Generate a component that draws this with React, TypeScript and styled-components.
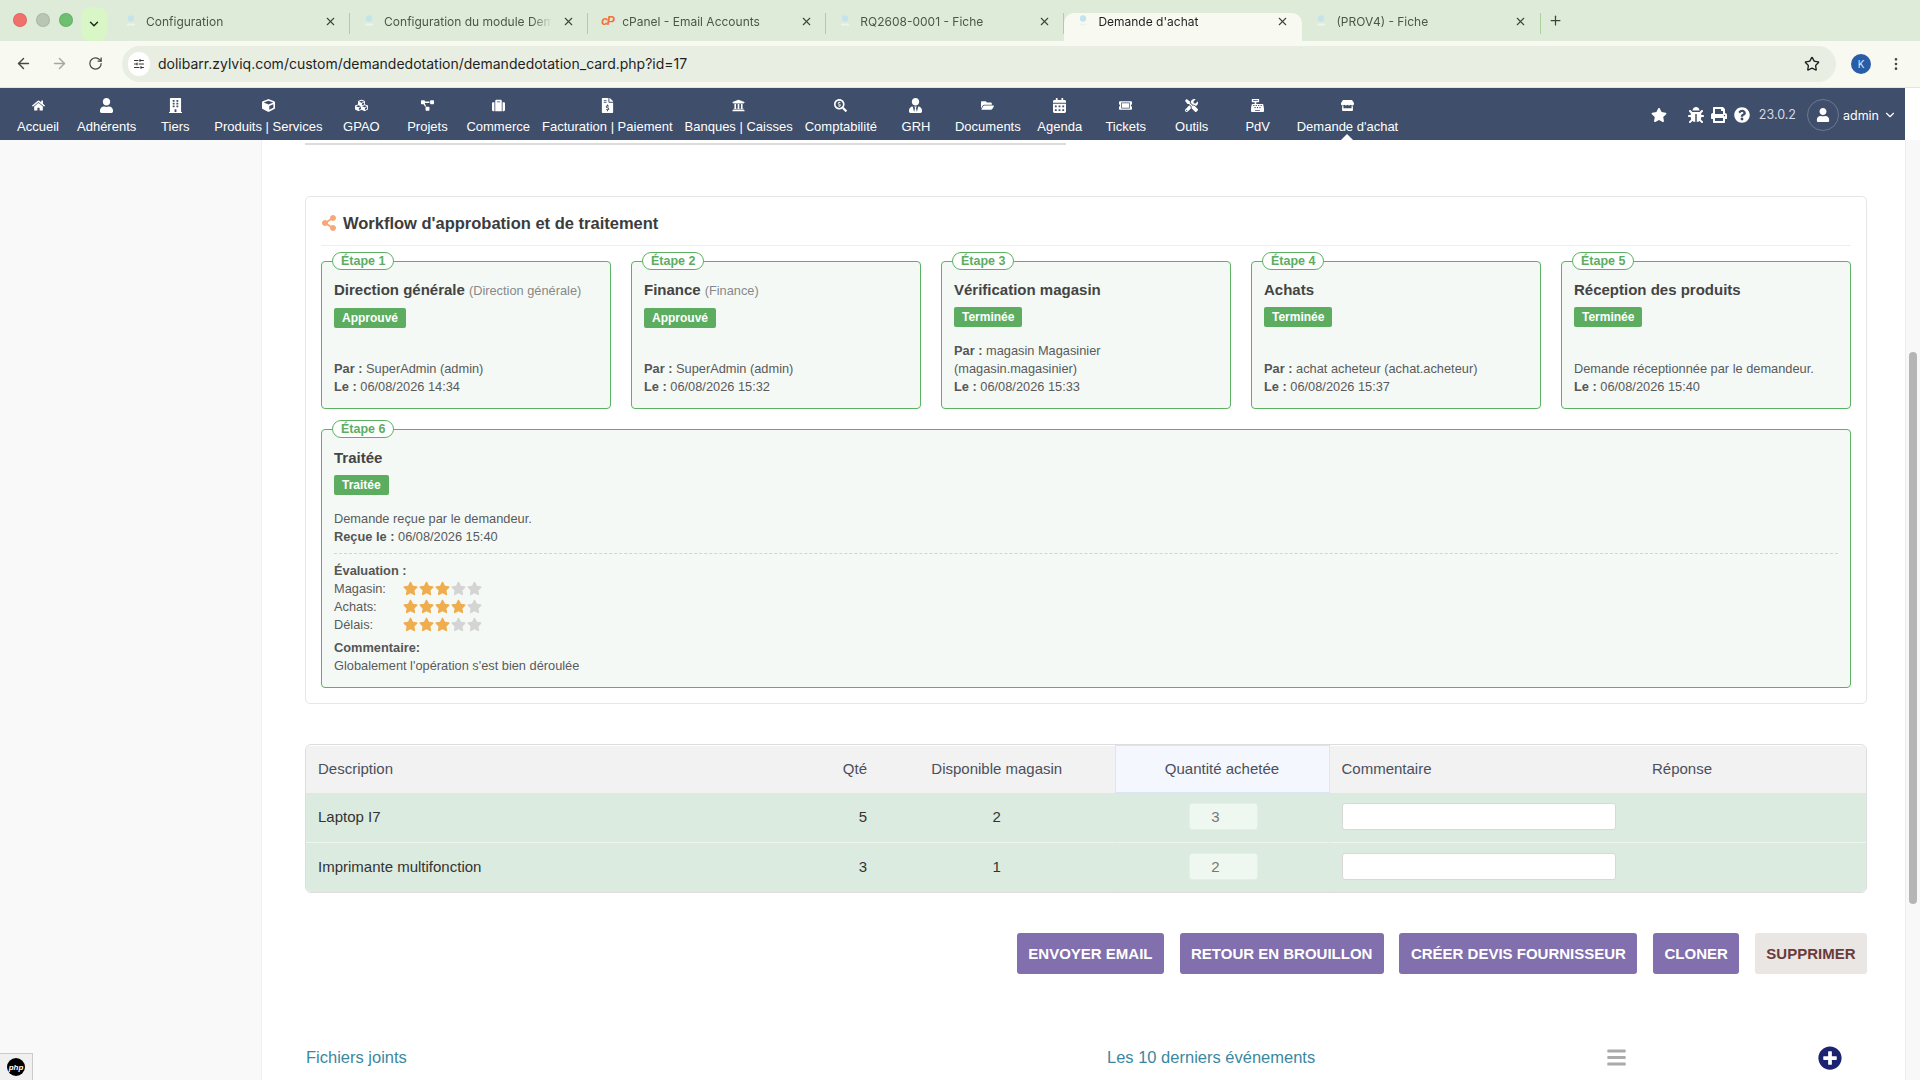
import React from "react";
import styled, { createGlobalStyle } from "styled-components";
import {
  FaHome, FaUser, FaBuilding, FaCube, FaCubes, FaProjectDiagram, FaSuitcase, FaFileInvoiceDollar,
  FaUniversity, FaSearchDollar, FaUserTie, FaFolderOpen, FaCalendarAlt, FaTicketAlt, FaTools,
  FaCashRegister, FaStore, FaStar, FaBug, FaPrint, FaQuestionCircle, FaShareAlt, FaPlusCircle, FaBars,
} from "react-icons/fa";
import { ArrowLeft, ArrowRight, RotateCw, Star, EllipsisVertical, X, Plus, ChevronDown, SlidersHorizontal } from "lucide-react";

const GlobalStyle = createGlobalStyle`
  html, body { margin: 0; padding: 0; height: 100%; overflow: hidden; background: #fff; }
  body { font-family: "Liberation Sans", Arial, sans-serif; color: #333; }
  * { box-sizing: border-box; }
`;

const tabs = [
  { title: "Configuration" },
  { title: "Configuration du module Demande" },
  { title: "cPanel - Email Accounts", cpanel: true },
  { title: "RQ2608-0001 - Fiche" },
  { title: "Demande d'achat", active: true },
  { title: "(PROV4) - Fiche" },
];

const menu = [
  { label: "Accueil", icon: FaHome },
  { label: "Adhérents", icon: FaUser },
  { label: "Tiers", icon: FaBuilding },
  { label: "Produits | Services", icon: FaCube },
  { label: "GPAO", icon: FaCubes },
  { label: "Projets", icon: FaProjectDiagram },
  { label: "Commerce", icon: FaSuitcase },
  { label: "Facturation | Paiement", icon: FaFileInvoiceDollar },
  { label: "Banques | Caisses", icon: FaUniversity },
  { label: "Comptabilité", icon: FaSearchDollar },
  { label: "GRH", icon: FaUserTie },
  { label: "Documents", icon: FaFolderOpen },
  { label: "Agenda", icon: FaCalendarAlt },
  { label: "Tickets", icon: FaTicketAlt },
  { label: "Outils", icon: FaTools },
  { label: "PdV", icon: FaCashRegister },
  { label: "Demande d'achat", icon: FaStore, active: true },
];

const steps = [
  { n: 1, title: "Direction générale", sub: "(Direction générale)", badge: "Approuvé", by: "SuperAdmin (admin)", date: "06/08/2026 14:34" },
  { n: 2, title: "Finance", sub: "(Finance)", badge: "Approuvé", by: "SuperAdmin (admin)", date: "06/08/2026 15:32" },
  { n: 3, title: "Vérification magasin", badge: "Terminée", by: "magasin Magasinier (magasin.magasinier)", date: "06/08/2026 15:33" },
  { n: 4, title: "Achats", badge: "Terminée", by: "achat acheteur (achat.acheteur)", date: "06/08/2026 15:37" },
  { n: 5, title: "Réception des produits", badge: "Terminée", note: "Demande réceptionnée par le demandeur.", date: "06/08/2026 15:40" },
];

const ratings = [
  { label: "Magasin:", value: 3 },
  { label: "Achats:", value: 4 },
  { label: "Délais:", value: 3 },
];

const lines = [
  { name: "Laptop I7", qty: 5, stock: 2, bought: 3 },
  { name: "Imprimante multifonction", qty: 3, stock: 1, bought: 2 },
];

const Page = styled.div`
  width: 1920px;
  height: 1080px;
  display: flex;
  flex-direction: column;
  overflow: hidden;
`;

const TabStrip = styled.div`
  height: 41px;
  flex: none;
  background: #dfebd9;
  display: flex;
  align-items: flex-end;
`;
const Lights = styled.div`
  width: 81px;
  height: 41px;
  padding: 20px 0 0 13px;
  display: flex;
  gap: 9px;
  align-items: flex-start;
`;
const Light = styled.span<{ $c: string }>`
  width: 14px;
  height: 14px;
  margin-top: -7px;
  border-radius: 50%;
  background: ${(p) => p.$c};
  border: 1px solid rgba(0, 0, 0, 0.08);
`;
const TabSearch = styled.div`
  width: 26px;
  height: 34px;
  align-self: flex-start;
  margin-top: 7px;
  margin-right: 5px;
  border-radius: 9px;
  background: #d8f6c6;
  color: #1d2a1a;
  display: flex;
  align-items: center;
  justify-content: center;
`;
const Tab = styled.div<{ $active?: boolean }>`
  position: relative;
  width: 238.1px;
  height: 28px;
  padding: 0 0 12px 13px;
  display: flex;
  align-items: center;
  gap: 9px;
  font: 12px Inter, "Liberation Sans", sans-serif;
  color: ${(p) => (p.$active ? "#1f1f1f" : "#4c5649")};
  background: ${(p) => (p.$active ? "#f8faf2" : "transparent")};
  border-radius: ${(p) => (p.$active ? "10px 10px 0 0" : "0")};
  &::after {
    content: "";
    display: ${(p) => (p.$active ? "none" : "block")};
    position: absolute;
    right: 0;
    top: 0;
    height: 21px;
    width: 1px;
    background: #aed09d;
  }
`;
const TabTitle = styled.span`
  width: 168px;
  margin-right: 1px;
  overflow: hidden;
  white-space: nowrap;
  flex: none;
  mask-image: linear-gradient(to right, #000 88%, transparent 100%);
`;
const TabClose = styled.span`
  display: flex;
  color: #3c4539;
`;
const CpanelMark = styled.span`
  width: 12px;
  flex: none;
  font: italic bold 12px "Liberation Sans", sans-serif;
  letter-spacing: -1px;
  color: #f0723a;
`;
const NewTab = styled.div`
  align-self: flex-start;
  margin: 13px 0 0 7px;
  color: #3c4539;
  display: flex;
`;

const Toolbar = styled.div`
  height: 47px;
  flex: none;
  background: #f8faf2;
  border-bottom: 1px solid #e4e6de;
  padding: 4px 0 5px 5px;
  display: flex;
  align-items: center;
`;
const NavButton = styled.div<{ $dim?: boolean }>`
  width: 36px;
  display: flex;
  justify-content: center;
  color: ${(p) => (p.$dim ? "#a3a89f" : "#454a43")};
`;
const AddressBar = styled.div`
  margin-left: 9px;
  width: 1714px;
  height: 36px;
  border-radius: 18px;
  background: #e8eee2;
  padding: 0 16px 0 6px;
  display: flex;
  align-items: center;
  font: 14px Inter, "Liberation Sans", sans-serif;
  color: #1f1f1f;
`;
const SiteInfo = styled.span`
  width: 22px;
  height: 24px;
  border-radius: 11px;
  background: #fff;
  margin-right: 8px;
  display: flex;
  align-items: center;
  justify-content: center;
  color: #333;
`;
const Avatar = styled.span`
  width: 20px;
  height: 20px;
  margin-left: 15px;
  border-radius: 50%;
  background: #2a5da8;
  color: #dde8f8;
  font: 10px Inter, sans-serif;
  display: flex;
  align-items: center;
  justify-content: center;
`;
const Dots = styled.span`
  margin-left: 17px;
  display: flex;
  color: #454a43;
`;

const TopMenu = styled.nav`
  height: 52px;
  flex: none;
  width: 1905px;
  background: #3f4e6b;
  padding-left: 5px;
  display: flex;
`;
const MenuItem = styled.div<{ $active?: boolean }>`
  position: relative;
  min-width: 66px;
  padding: 10px 6px 0;
  display: flex;
  flex-direction: column;
  align-items: center;
  gap: 6px;
  color: #fff;
  font-size: 13px;
  line-height: 15px;
  white-space: nowrap;
  svg { height: 15px; }
  &::after {
    content: "";
    display: ${(p) => (p.$active ? "block" : "none")};
    position: absolute;
    left: 50%;
    bottom: 0;
    margin-left: -6px;
    border: 6px solid transparent;
    border-top: 0;
    border-bottom-color: #fff;
  }
`;
const MenuTools = styled.div`
  margin-left: auto;
  padding: 2px 8px 0 0;
  display: flex;
  align-items: center;
  color: #fff;
`;
const ToolIcon = styled.span<{ $gap: number }>`
  margin-left: ${(p) => p.$gap}px;
  display: flex;
`;
const Version = styled.span`
  margin: -2px 0 0 9px;
  font: 12.5px Inter, "Liberation Sans", sans-serif;
  color: #d6d9e0;
`;
const UserCircle = styled.span`
  width: 32px;
  height: 32px;
  margin-left: 11px;
  border-radius: 50%;
  border: 1px solid #6b7891;
  display: flex;
  align-items: center;
  justify-content: center;
`;
const UserName = styled.span`
  margin-left: 4px;
  font: 12.5px Inter, "Liberation Sans", sans-serif;
`;
const UserCaret = styled.span`
  margin-left: 4px;
  display: flex;
`;

const Body = styled.div`
  flex: 1;
  min-height: 0;
  display: flex;
`;
const Sidebar = styled.aside`
  position: relative;
  width: 262px;
  flex: none;
  background: #f9f9f9;
  border-right: 1px solid #efefef;
`;
const PhpBadge = styled.div`
  position: absolute;
  left: 0;
  bottom: 0;
  width: 33px;
  height: 27px;
  background: #f0f0f0;
  border: 1px solid #ccc;
  border-left: 0;
  border-bottom: 0;
  display: flex;
  align-items: center;
  justify-content: center;
`;
const PhpDot = styled.span`
  width: 18px;
  height: 18px;
  border-radius: 50%;
  background: #000;
  color: #fff;
  font: italic bold 8px "Liberation Sans", sans-serif;
  display: flex;
  align-items: center;
  justify-content: center;
`;
const Main = styled.main`
  width: 1643px;
  padding: 3px 38px 0 43px;
  background: #fff;
  overflow: hidden;
`;
const Remnant = styled.div`
  width: 761px;
  height: 2px;
  background: #dcdcdc;
`;
const Panel = styled.section`
  margin-top: 51px;
  height: 508px;
  border: 1px solid #e6e6e6;
  border-radius: 5px;
  padding: 0 15px;
`;
const PanelHead = styled.h2`
  margin: 0 0 15px;
  height: 49px;
  padding-top: 4px;
  border-bottom: 1px solid #eee;
  display: flex;
  align-items: center;
  gap: 6px;
  font-size: 16.5px;
  font-weight: 700;
  color: #3c3c3c;
  svg { color: #f7a878; }
`;
const StepGrid = styled.div`
  display: grid;
  grid-template-columns: repeat(5, 1fr);
  gap: 20px;
`;
const StepCard = styled.article<{ $wide?: boolean }>`
  position: relative;
  grid-column: ${(p) => (p.$wide ? "1 / -1" : "auto")};
  height: ${(p) => (p.$wide ? 259 : 148)}px;
  padding: 18px 12px 12px;
  background: #f4f9f6;
  border: 1px solid #5cb262;
  border-radius: 4px;
  display: flex;
  flex-direction: column;
  align-items: flex-start;
  font-size: 12.8px;
  line-height: 18px;
  color: #5a5a5a;
`;
const StepLabel = styled.span`
  position: absolute;
  left: 10px;
  top: -10px;
  height: 18px;
  padding: 0 8px;
  background: #fff;
  border: 1px solid #5cb262;
  border-radius: 9px;
  font-size: 12.5px;
  font-weight: 700;
  line-height: 16px;
  color: #5cad60;
`;
const StepTitle = styled.div`
  font-size: 15px;
  font-weight: 700;
  color: #444;
  line-height: 20px;
  white-space: nowrap;
  small {
    font-size: 12.8px;
    font-weight: 400;
    color: #888;
    margin-left: 4px;
  }
`;
const Badge = styled.span`
  margin-top: 7px;
  height: 20px;
  padding: 0 8px;
  border-radius: 2px;
  background: #5cad5f;
  color: #fff;
  font-size: 12px;
  font-weight: 700;
  line-height: 20px;
`;
const StepInfo = styled.div`
  margin-top: auto;
  b { color: #555; }
`;
const StepReceipt = styled.div`
  margin-top: 15px;
  b { color: #555; }
`;
const Divider = styled.hr`
  width: 100%;
  margin: 7px 0 8px;
  border: 0;
  border-top: 1px dashed #cfd6d0;
`;
const RatingTitle = styled.b`
  color: #555;
`;
const RatingRow = styled.div`
  display: flex;
  align-items: center;
`;
const RatingName = styled.span`
  width: 69px;
`;
const Stars = styled.span`
  display: flex;
  gap: 1px;
  margin-top: -1px;
`;
const StarMark = styled(FaStar)<{ $on: boolean }>`
  width: 15px;
  height: 15px;
  color: ${(p) => (p.$on ? "#f0ad4e" : "#d4d4d4")};
`;
const CommentBlock = styled.div`
  margin-top: 5px;
  b { color: #555; }
`;

const TableWrap = styled.div`
  margin-top: 40px;
  border: 1px solid #ddd;
  border-radius: 6px;
  overflow: hidden;
`;
const Table = styled.table`
  width: 100%;
  table-layout: fixed;
  border-collapse: collapse;
  font-size: 15px;
`;
const Th = styled.th<{ $align?: string; $focus?: boolean }>`
  height: 47px;
  padding: 0 12px ${(p) => (p.$focus ? 0 : 2)}px;
  font-weight: 400;
  color: #4a4f5c;
  background: ${(p) => (p.$focus ? "#f4f8fe" : "#f2f2f2")};
  text-align: ${(p) => p.$align || "left"};
  ${(p) => (p.$focus ? "border: 1px solid #d8e6f8; border-bottom-width: 2px;" : "")}
`;
const Tr = styled.tr`
  background: #dcebdf;
  & + & { border-top: 1px solid #eef5ef; }
`;
const Td = styled.td<{ $align?: string; $focus?: boolean }>`
  height: 49.5px;
  padding: 0 12px 2px;
  color: #333;
  text-align: ${(p) => p.$align || "left"};
  ${(p) => (p.$focus ? "border-left: 1px solid #d8e6f8; border-right: 1px solid #d8e6f8;" : "")}
`;
const BoughtInput = styled.input`
  width: 69px;
  height: 27px;
  padding: 0 15px 0 0;
  background: #eef7f0;
  border: 1px solid #e3eee6;
  border-radius: 3px;
  font: 15px "Liberation Sans", sans-serif;
  color: #777;
  text-align: center;
  display: block;
  margin: 0 auto;
  transform: translateX(1px);
`;
const CommentInput = styled.input`
  width: 274px;
  height: 27px;
  background: #fff;
  border: 1px solid #d8d8d8;
  border-radius: 3px;
  display: block;
`;

const Actions = styled.div`
  margin-top: 40px;
  display: flex;
  justify-content: flex-end;
  gap: 15.5px;
`;
const ActionButton = styled.button<{ $danger?: boolean }>`
  height: 41px;
  padding: 0 11.5px;
  border: 0;
  border-radius: 3px;
  background: ${(p) => (p.$danger ? "#eae6e4" : "#8170ad")};
  color: ${(p) => (p.$danger ? "#6b3b3b" : "#fff")};
  font: 700 15px "Liberation Sans", sans-serif;
  text-transform: uppercase;
  white-space: nowrap;
`;
const Footer = styled.div`
  margin-top: 72px;
  padding-left: 1px;
  display: grid;
  grid-template-columns: 801px 499px 212px auto;
  align-items: center;
  height: 20px;
`;
const FooterTitle = styled.div`
  font-size: 16.5px;
  color: #3c87a0;
`;
const ListIcon = styled(FaBars)`
  width: 21px;
  height: 21px;
  color: #aaa;
`;
const AddIcon = styled(FaPlusCircle)`
  width: 24px;
  height: 24px;
  color: #1c2370;
`;

const Scrollbar = styled.div`
  width: 15px;
  flex: none;
  background: #f8f8f8;
  border-left: 1px solid #ececec;
  padding: 212px 3px 0;
`;
const ScrollThumb = styled.div`
  height: 552px;
  border-radius: 4px;
  background: #b5b5b5;
`;

const Favicon = () => (
  <svg width="12" height="14" viewBox="0 0 12 14">
    <circle cx="6" cy="4.5" r="3.2" fill="#c3e4ea" />
    <rect x="2" y="9.5" width="8" height="2" rx="1" fill="#eef3ee" />
  </svg>
);

const StepBody = ({ step }: { step: (typeof steps)[number] }) => (
  <>
    <StepTitle>
      {step.title}
      {step.sub && <small>{step.sub}</small>}
    </StepTitle>
    <Badge>{step.badge}</Badge>
    <StepInfo>
      {step.by && (
        <div>
          <b>Par : </b>
          {step.by}
        </div>
      )}
      {step.note && <div>{step.note}</div>}
      <div>
        <b>Le : </b>
        {step.date}
      </div>
    </StepInfo>
  </>
);

export default function App() {
  return (
    <Page>
      <GlobalStyle />
      <TabStrip>
        <Lights>
          <Light $c="#f0706a" />
          <Light $c="#b9c6b2" />
          <Light $c="#6cc070" />
        </Lights>
        <TabSearch>
          <ChevronDown size={14} strokeWidth={2.5} />
        </TabSearch>
        {tabs.map((t) => (
          <Tab key={t.title} $active={t.active}>
            {t.cpanel ? <CpanelMark>cP</CpanelMark> : <Favicon />}
            <TabTitle>{t.title}</TabTitle>
            <TabClose>
              <X size={13} />
            </TabClose>
          </Tab>
        ))}
        <NewTab>
          <Plus size={15} />
        </NewTab>
      </TabStrip>

      <Toolbar>
        <NavButton>
          <ArrowLeft size={17} />
        </NavButton>
        <NavButton $dim>
          <ArrowRight size={17} />
        </NavButton>
        <NavButton>
          <RotateCw size={15} />
        </NavButton>
        <AddressBar>
          <SiteInfo>
            <SlidersHorizontal size={12} />
          </SiteInfo>
          dolibarr.zylviq.com/custom/demandedotation/demandedotation_card.php?id=17
          <Star size={16} style={{ marginLeft: "auto" }} />
        </AddressBar>
        <Avatar>K</Avatar>
        <Dots>
          <EllipsisVertical size={16} />
        </Dots>
      </Toolbar>

      <TopMenu>
        {menu.map((m) => (
          <MenuItem key={m.label} $active={m.active}>
            <m.icon />
            {m.label}
          </MenuItem>
        ))}
        <MenuTools>
          <ToolIcon $gap={0}>
            <FaStar size={16} />
          </ToolIcon>
          <ToolIcon $gap={21}>
            <FaBug size={16} />
          </ToolIcon>
          <ToolIcon $gap={7}>
            <FaPrint size={16} />
          </ToolIcon>
          <ToolIcon $gap={7}>
            <FaQuestionCircle size={16} />
          </ToolIcon>
          <Version>23.0.2</Version>
          <UserCircle>
            <FaUser size={14} />
          </UserCircle>
          <UserName>admin</UserName>
          <UserCaret>
            <ChevronDown size={14} />
          </UserCaret>
        </MenuTools>
      </TopMenu>

      <Body>
        <Sidebar>
          <PhpBadge>
            <PhpDot>php</PhpDot>
          </PhpBadge>
        </Sidebar>
        <Main>
          <Remnant />
          <Panel>
            <PanelHead>
              <FaShareAlt size={16} />
              Workflow d'approbation et de traitement
            </PanelHead>
            <StepGrid>
              {steps.map((s) => (
                <StepCard key={s.n}>
                  <StepLabel>Étape {s.n}</StepLabel>
                  <StepBody step={s} />
                </StepCard>
              ))}
              <StepCard $wide>
                <StepLabel>Étape 6</StepLabel>
                <StepTitle>Traitée</StepTitle>
                <Badge>Traitée</Badge>
                <StepReceipt>
                  <div>Demande reçue par le demandeur.</div>
                  <div>
                    <b>Reçue le : </b>06/08/2026 15:40
                  </div>
                </StepReceipt>
                <Divider />
                <RatingTitle>Évaluation :</RatingTitle>
                {ratings.map((r) => (
                  <RatingRow key={r.label}>
                    <RatingName>{r.label}</RatingName>
                    <Stars>
                      {[1, 2, 3, 4, 5].map((i) => (
                        <StarMark key={i} $on={i <= r.value} />
                      ))}
                    </Stars>
                  </RatingRow>
                ))}
                <CommentBlock>
                  <b>Commentaire:</b>
                  <div>Globalement l'opération s'est bien déroulée</div>
                </CommentBlock>
              </StepCard>
            </StepGrid>
          </Panel>

          <TableWrap>
            <Table>
              <colgroup>
                <col style={{ width: 512 }} />
                <col style={{ width: 61 }} />
                <col style={{ width: 236 }} />
                <col style={{ width: 214 }} />
                <col style={{ width: 311 }} />
                <col />
              </colgroup>
              <thead>
                <tr>
                  <Th>Description</Th>
                  <Th $align="right">Qté</Th>
                  <Th $align="center">Disponible magasin</Th>
                  <Th $align="center" $focus>
                    Quantité achetée
                  </Th>
                  <Th>Commentaire</Th>
                  <Th>Réponse</Th>
                </tr>
              </thead>
              <tbody>
                {lines.map((l) => (
                  <Tr key={l.name}>
                    <Td>{l.name}</Td>
                    <Td $align="right">{l.qty}</Td>
                    <Td $align="center">{l.stock}</Td>
                    <Td $focus>
                      <BoughtInput readOnly value={l.bought} />
                    </Td>
                    <Td>
                      <CommentInput />
                    </Td>
                    <Td />
                  </Tr>
                ))}
              </tbody>
            </Table>
          </TableWrap>

          <Actions>
            <ActionButton>Envoyer email</ActionButton>
            <ActionButton>Retour en brouillon</ActionButton>
            <ActionButton>Créer devis fournisseur</ActionButton>
            <ActionButton>Cloner</ActionButton>
            <ActionButton $danger>Supprimer</ActionButton>
          </Actions>

          <Footer>
            <FooterTitle>Fichiers joints</FooterTitle>
            <FooterTitle>Les 10 derniers événements</FooterTitle>
            <ListIcon />
            <AddIcon />
          </Footer>
        </Main>
        <Scrollbar>
          <ScrollThumb />
        </Scrollbar>
      </Body>
    </Page>
  );
}
